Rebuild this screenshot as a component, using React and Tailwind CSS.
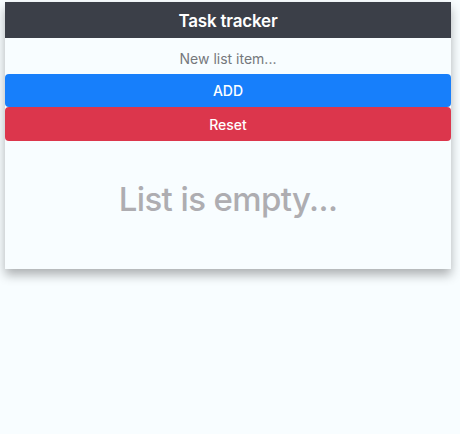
import React, { useState } from 'react';

const App = () => {
  const [items, setItems] = useState([]);
  const [text, setText] = useState('');

  const addItem = () => {
    if (!text.trim()) return;
    setItems([...items, text]);
    setText('');
  };

  return (
    <div
      className="min-h-[434px] w-[460px] bg-[#f8fdff] pt-[2px] pl-[5px]"
      style={{ fontFamily: 'Inter, "Open Sans", sans-serif' }}
    >
      <div className="w-[446px] h-[267px] bg-[#f8fdff] shadow-[0_6px_10px_rgba(0,0,0,0.3)] flex flex-col">
        {/* Header */}
        <div className="h-[36px] bg-[#3b3f48] flex items-center justify-center pt-[3px]">
          <h1 className="text-white text-[17px] font-semibold tracking-[-0.2px]">Task tracker</h1>
        </div>

        {/* Input */}
        <input
          value={text}
          onChange={(e) => setText(e.target.value)}
          placeholder="New list item..."
          className="h-[36px] w-full bg-transparent pt-[5px] text-center text-[14px] text-gray-700 placeholder:text-[#75787c] outline-none"
        />

        <button
          onClick={addItem}
          className="h-[33px] w-full rounded-[4px] bg-[#177ffb] text-white text-[14px] font-medium"
        >
          ADD
        </button>
        <button
          onClick={() => setItems([])}
          className="h-[34px] w-full rounded-[4px] bg-[#dc364c] text-white text-[14px] font-medium"
        >
          Reset
        </button>

        {/* List */}
        <div className="flex-1 flex items-center justify-center pb-[10px]">
          {items.length === 0 ? (
            <p className="text-[33px] font-medium text-[#aeadb1] tracking-[-0.6px]">List is empty...</p>
          ) : (
            <ul className="w-full px-3">
              {items.map((item, i) => (
                <li key={i} className="py-1 text-gray-700">{item}</li>
              ))}
            </ul>
          )}
        </div>
      </div>
    </div>
  );
};

export default App;
